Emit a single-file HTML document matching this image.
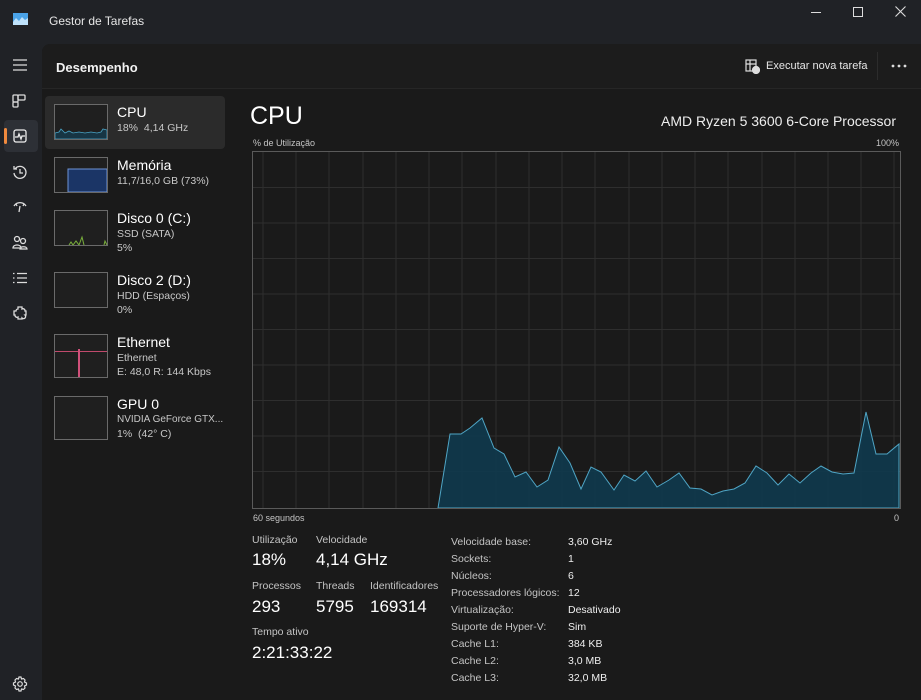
<!DOCTYPE html><html><head><meta charset="utf-8"><style>
*{margin:0;padding:0;box-sizing:border-box}
body{width:921px;height:700px;background:#202226;font-family:"Liberation Sans",sans-serif;color:#fff;position:relative;overflow:hidden}
.a{position:absolute;white-space:nowrap}
.r{position:absolute;white-space:nowrap;text-align:right}
.main{position:absolute;left:42px;top:44px;width:879px;height:656px;background:#1a1a1a;border-top-left-radius:8px}
.hdr{position:absolute;left:42px;top:44px;width:879px;height:45px;background:#1c1c1c;border-bottom:1px solid #262626;border-top-left-radius:8px}
.thumb{position:absolute;left:54px;width:54px;height:36px;border:1px solid #6a6a6a;background:#1f1f1f}
.t1{font-size:14px;color:#fff}
.t2{font-size:10.5px;color:#c8c8c8}
.lbl{font-size:10.5px;color:#c4c4c4}
.big{font-size:17px;color:#fff}
.kv{font-size:10.5px;color:#c4c4c4}
.vv{font-size:10.5px;color:#eee}
</style></head><body>
<div class="main"></div>
<div class="hdr"></div>
<svg class="a" style="left:13px;top:13px" width="15" height="12"><rect width="15" height="12" fill="#4aa3e8"/><path d="M0 9 L3 5 L6 8 L9 4 L12 7 L15 5 V12 H0Z" fill="#bfe2fb"/></svg>
<div class="a" style="left:49px;top:14px;font-size:12px;color:#e6e6e6">Gestor de Tarefas</div>
<div class="a" style="left:811px;top:12px;width:10px;height:1px;background:#ddd"></div>
<div class="a" style="left:853px;top:7px;width:10px;height:10px;border:1px solid #ddd"></div>
<svg class="a" style="left:895px;top:6px" width="11" height="11" stroke="#ddd" stroke-width="1.1"><path d="M0.5 0.5L10.5 10.5M10.5 0.5L0.5 10.5"/></svg>
<svg class="a" style="left:12px;top:58px" width="16" height="14" stroke="#ddd" stroke-width="1.3" fill="none"><path d="M1 2H15M1 7H15M1 12H15"/></svg>
<svg class="a" style="left:12px;top:94px" width="14" height="14" stroke="#ddd" stroke-width="1.3" fill="none"><rect x="1" y="1" width="5" height="7" rx="1"/><rect x="6" y="1" width="7" height="5" rx="1"/><rect x="1" y="8" width="5" height="5" rx="1"/></svg>
<div class="a" style="left:4px;top:120px;width:34px;height:32px;background:#2d3036;border-radius:4px"></div>
<div class="a" style="left:4px;top:128px;width:3px;height:16px;background:#f08a3e;border-radius:2px"></div>
<svg class="a" style="left:13px;top:129px" width="14" height="14" stroke="#eee" stroke-width="1.3" fill="none"><rect x="1" y="1" width="12" height="12" rx="2"/><path d="M2 8H5L6 5L8 10L9 7H12"/></svg>
<svg class="a" style="left:12px;top:164px" width="16" height="16" stroke="#ddd" stroke-width="1.3" fill="none"><path d="M3 5A6 6 0 1 1 2 9M2 2V5H5M8 5V9H11"/></svg>
<svg class="a" style="left:12px;top:200px" width="16" height="14" stroke="#ddd" stroke-width="1.3" fill="none"><path d="M2 6A7 7 0 0 1 14 6M8 6L7 12M4 4L5 6M12 4L11 6"/></svg>
<svg class="a" style="left:12px;top:235px" width="16" height="16" stroke="#ddd" stroke-width="1.3" fill="none"><circle cx="5" cy="4" r="2.5"/><circle cx="11" cy="6" r="2.5"/><path d="M1 13C1 9 9 9 9 13ZM8 14C8 11 15 11 15 14Z"/></svg>
<svg class="a" style="left:12px;top:272px" width="16" height="12" stroke="#ddd" stroke-width="1.3" fill="none"><path d="M1 1.5H2.5M5 1.5H15M1 6H2.5M5 6H15M1 10.5H2.5M5 10.5H15"/></svg>
<svg class="a" style="left:12px;top:305px" width="16" height="16" stroke="#ddd" stroke-width="1.3" fill="none"><path d="M6 2H10V4A2 2 0 0 1 13 6H14V10H13A2 2 0 0 1 10 13V14H6V12A2 2 0 0 1 3 10H2V6H4A2 2 0 0 1 6 4Z"/></svg>
<svg class="a" style="left:12px;top:676px" width="16" height="16" stroke="#ddd" stroke-width="1.2" fill="none"><circle cx="8" cy="8" r="2.3"/><path d="M7 1H9L9.5 3L11.5 2.5L13 4L12.5 6L14.5 7V9L12.5 10L13 12L11.5 13.5L9.5 13L9 15H7L6.5 13L4.5 13.5L3 12L3.5 10L1.5 9V7L3.5 6L3 4L4.5 2.5L6.5 3Z"/></svg>
<div class="a" style="left:56px;top:60px;font-size:13px;font-weight:bold;color:#f2f2f2">Desempenho</div>
<svg class="a" style="left:745px;top:59px" width="15" height="15" stroke="#ddd" stroke-width="1.2" fill="none"><rect x="1" y="1" width="10" height="11"/><path d="M1 5H11M5 1V12"/><circle cx="11" cy="11" r="3.5" fill="#ddd"/></svg>
<div class="a" style="left:766px;top:60px;font-size:11px;color:#e6e6e6">Executar nova tarefa</div>
<div class="a" style="left:877px;top:52px;width:1px;height:28px;background:#2c2c2c"></div>
<svg class="a" style="left:891px;top:64px" width="16" height="4" fill="#ddd"><circle cx="2" cy="2" r="1.4"/><circle cx="8" cy="2" r="1.4"/><circle cx="14" cy="2" r="1.4"/></svg>
<div class="a" style="left:45px;top:96px;width:180px;height:53px;background:#2b2b2b;border-radius:4px"></div>
<div class="thumb" style="top:104px"><svg width="52" height="34"><path d="M0 34V28L4 27L6 24L10 28L14 26L18 28L24 27L30 28L36 27L42 28L46 27L48 24L52 25V34Z" fill="#173544" stroke="#4aa4c6" stroke-width="0.8"/></svg></div>
<div class="a t1" style="left:117px;top:104px">CPU</div><div class="a t2" style="left:117px;top:122px">18%&nbsp; 4,14 GHz</div>
<div class="thumb" style="top:157px"><svg width="52" height="34"><path d="M13 34V11H52V34Z" fill="#1b3566" stroke="#6e93d6" stroke-width="1"/></svg></div>
<div class="a t1" style="left:117px;top:157px">Memória</div><div class="a t2" style="left:117px;top:175px">11,7/16,0 GB (73%)</div>
<div class="thumb" style="top:210px"><svg width="52" height="34"><path d="M14 34L16 31L18 34L21 30L24 34L27 26L29 34M49 34L50 30L52 34" fill="none" stroke="#7ab03c" stroke-width="1"/></svg></div>
<div class="a t1" style="left:117px;top:210px">Disco 0 (C:)</div><div class="a t2" style="left:117px;top:228px">SSD (SATA)</div><div class="a t2" style="left:117px;top:242px">5%</div>
<div class="thumb" style="top:272px"></div>
<div class="a t1" style="left:117px;top:272px">Disco 2 (D:)</div><div class="a t2" style="left:117px;top:290px">HDD (Espaços)</div><div class="a t2" style="left:117px;top:304px">0%</div>
<div class="thumb" style="top:334px;height:44px"><div class="a" style="left:0;top:16px;width:52px;height:1px;background:#c04a6c"></div><div class="a" style="left:23px;top:14px;width:2px;height:28px;background:#d0507a"></div></div>
<div class="a t1" style="left:117px;top:334px">Ethernet</div><div class="a t2" style="left:117px;top:352px">Ethernet</div><div class="a t2" style="left:117px;top:366px">E: 48,0 R: 144 Kbps</div>
<div class="thumb" style="top:396px;height:44px"></div>
<div class="a t1" style="left:117px;top:396px">GPU 0</div><div class="a t2" style="left:117px;top:414px;font-size:10px">NVIDIA GeForce GTX...</div><div class="a t2" style="left:117px;top:428px">1%&nbsp; (42° C)</div>
<div class="a" style="left:250px;top:102px;font-size:25px;color:#fff">CPU</div>
<div class="r" style="right:25px;top:113px;font-size:14px;color:#eee">AMD Ryzen 5 3600 6-Core Processor</div>
<div class="a lbl" style="left:253px;top:138px;font-size:9px">% de Utilização</div>
<div class="r" style="right:22px;top:138px;font-size:9px;color:#c4c4c4">100%</div>
<svg class="a" style="left:252px;top:151px" width="649" height="359">
<g stroke="#2e2e2e" stroke-width="1">
<path d="M11 0V358M44 0V358M77 0V358M111 0V358M144 0V358M177 0V358M210 0V358M244 0V358M277 0V358M310 0V358M343 0V358M377 0V358M410 0V358M443 0V358M476 0V358M510 0V358M543 0V358M576 0V358M609 0V358M642 0V358"/>
<path d="M0 36.5H649M0 72H649M0 107.5H649M0 143H649M0 178.5H649M0 214H649M0 249.5H649M0 285H649M0 320.5H649"/>
</g>
<path d="M186 357L198 283L209 283L218 277L230 267L242 297L252 303L263 326L274 321L285 336L296 329L307 296L318 312L329 338L339 316L349 321L362 339L372 324L383 330L394 320L405 336L417 329L427 322L438 337L449 338L460 344L471 340L482 338L493 332L504 315L515 322L526 334L537 323L548 332L559 322L569 315L580 321L591 323L602 322L614 261L624 303L635 303L647 293V357Z" fill="#0f3a4e" fill-opacity="0.9" stroke="#4fa5c5" stroke-width="1"/>
<rect x="0.5" y="0.5" width="648" height="357" fill="none" stroke="#5a5a5a"/>
</svg>
<div class="a lbl" style="left:253px;top:513px;font-size:9px">60 segundos</div>
<div class="a lbl" style="left:894px;top:513px;font-size:9px">0</div>
<div class="a lbl" style="left:252px;top:534px">Utilização</div><div class="a big" style="left:252px;top:550px">18%</div>
<div class="a lbl" style="left:316px;top:534px">Velocidade</div><div class="a big" style="left:316px;top:550px">4,14 GHz</div>
<div class="a lbl" style="left:252px;top:580px">Processos</div><div class="a big" style="left:252px;top:597px">293</div>
<div class="a lbl" style="left:316px;top:580px">Threads</div><div class="a big" style="left:316px;top:597px">5795</div>
<div class="a lbl" style="left:370px;top:580px">Identificadores</div><div class="a big" style="left:370px;top:597px">169314</div>
<div class="a lbl" style="left:252px;top:626px">Tempo ativo</div><div class="a big" style="left:252px;top:643px">2:21:33:22</div>
<div class="a kv" style="left:451px;top:534px;line-height:17px">Velocidade base:<br>Sockets:<br>Núcleos:<br>Processadores lógicos:<br>Virtualização:<br>Suporte de Hyper-V:<br>Cache L1:<br>Cache L2:<br>Cache L3:</div>
<div class="a vv" style="left:568px;top:534px;line-height:17px">3,60 GHz<br>1<br>6<br>12<br>Desativado<br>Sim<br>384 KB<br>3,0 MB<br>32,0 MB</div>
</body></html>
